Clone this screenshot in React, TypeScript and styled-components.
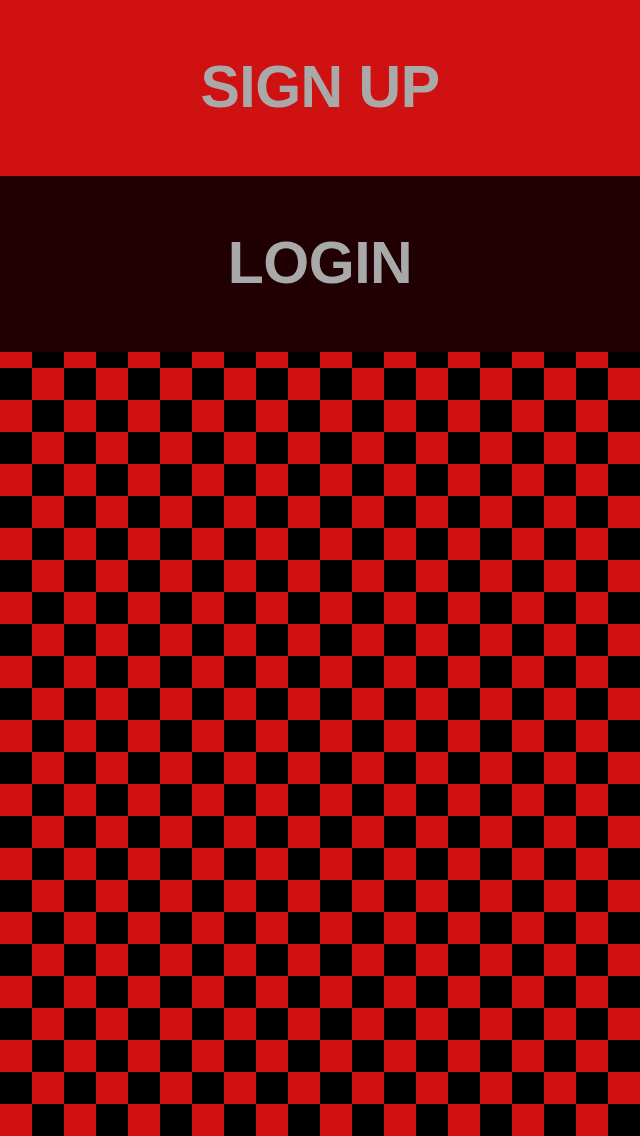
import React from "react";
import styled, { createGlobalStyle } from "styled-components";

const Global = createGlobalStyle`
  html, body { margin: 0; padding: 0; }
  body { background: #000; }
  #root { min-height: 100vh; }
`;

const Screen = styled.div`
  display: flex;
  flex-direction: column;
  width: 640px;
  height: 1136px;
  overflow: hidden;
`;

const ActionBar = styled.button<{ $bg: string }>`
  display: flex;
  align-items: center;
  justify-content: center;
  height: 176px;
  width: 100%;
  border: 0;
  margin: 0;
  padding: 0 0 2px;
  background: ${(p) => p.$bg};
  color: #a9a9a9;
  font-family: "Liberation Sans", Arial, Helvetica, sans-serif;
  font-weight: 700;
  font-size: 59px;
  letter-spacing: -0.5px;
  cursor: pointer;
  flex: none;
`;

const Board = styled.div`
  flex: 1;
  background-image: conic-gradient(#000 25%, #d01111 0 50%, #000 0 75%, #d01111 0);
  background-size: 64px 64px;
  background-position: 0 -16px;
`;

export default function App() {
  return (
    <>
      <Global />
      <Screen>
        <ActionBar $bg="#d01111">SIGN UP</ActionBar>
        <ActionBar $bg="#200003">LOGIN</ActionBar>
        <Board />
      </Screen>
    </>
  );
}
